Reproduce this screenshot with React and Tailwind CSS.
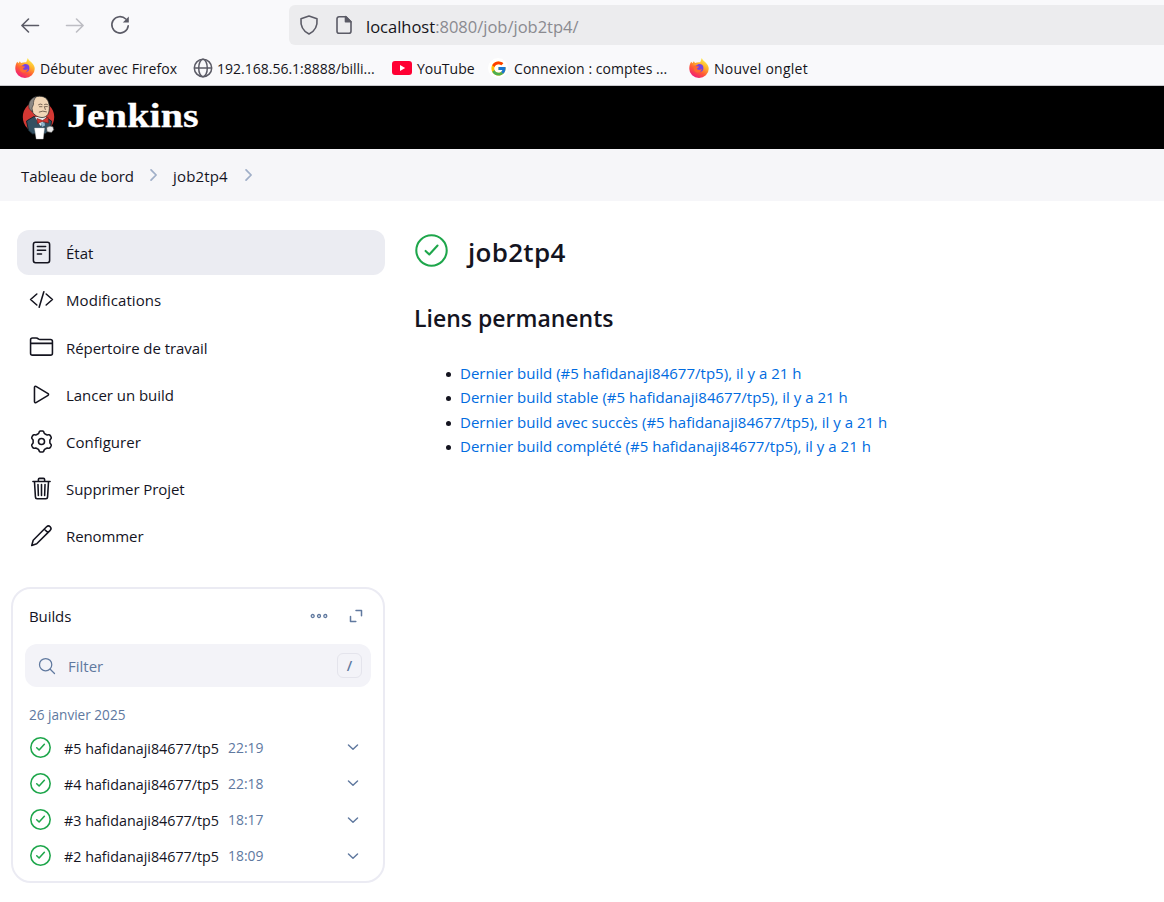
import React from "react";
import { FcGoogle } from "react-icons/fc";

function Stroke({ className, width = 32, children }) {
  return (
    <svg viewBox="0 0 512 512" className={className} fill="none" stroke="currentColor" strokeWidth={width} strokeLinecap="round" strokeLinejoin="round">
      {children}
    </svg>
  );
}

function Firefox() {
  return (
    <svg viewBox="0 0 20 20" className="size-5 shrink-0">
      <defs>
        <linearGradient id="fx" x1="0.85" y1="0.05" x2="0.3" y2="1">
          <stop offset="0" stopColor="#fff44f" />
          <stop offset="0.35" stopColor="#ffb02a" />
          <stop offset="0.65" stopColor="#ff5a36" />
          <stop offset="1" stopColor="#f0197a" />
        </linearGradient>
      </defs>
      <path d="M2.200 3.700 3.500 5.200 4.800 3.300 6 5c1.700-.8 3.500-1 5.200-.8L12.800 0c.4 2 2.500 3 3.800 4.500C19 7 19.900 9 19.700 11a9.700 9 0 0 1-19.400 0C.2 8.200.9 5.500 2.200 3.700Z" fill="url(#fx)" />
      <circle cx="10.300" cy="10" r="4.100" fill="#7542e5" />
      <path d="M4.800 8.200c1.500-.5 3.500.2 5.300.4-.3 1.400-2 1.400-2 2.300 1 1.400 3.700 1.100 4.800-.3-.4 2.600-2 4-4.200 3.900-2.800 0-4.600-3-3.900-6.300Z" fill="#ff6a32" />
      <path d="M4 6.500c2-1.700 4.500-1.300 5.600-.5-1 .2-1.500.8-1.400 1.600Z" fill="#ffa030" />
    </svg>
  );
}

function Globe() {
  return (
    <svg viewBox="0 0 20 20" className="size-5 shrink-0 text-[#5b5b66]" fill="none" stroke="currentColor" strokeWidth="1.500">
      <circle cx="10" cy="10" r="8.700" />
      <ellipse cx="10" cy="10" rx="4.300" ry="8.700" />
      <path d="M1.500 10h17" />
    </svg>
  );
}

function YouTube() {
  return (
    <svg viewBox="0 0 20 14" className="h-3.5 w-5 shrink-0">
      <rect width="20" height="14" rx="3" fill="#ff0033" />
      <path d="M8 4v6l5.200-3z" fill="#fff" />
    </svg>
  );
}

function Mascot() {
  return (
    <svg viewBox="0 0 34 45" className="h-[45px] w-[34px] shrink-0">
      <ellipse cx="16.500" cy="22" rx="15.700" ry="16" fill="#d33833" />
      <path d="M4.500 26 12 21.500l6 3 5-2.500 6.500 4-1 8-5 4.500-13 .5-4-3.500Z" fill="#335061" stroke="#152229" strokeWidth="1" />
      <path d="M13 22 18.500 31l6-9Z" fill="#e9eef0" />
      <path d="M15 23.500 20.500 25.500l5.500-3.500.5 6-6-1.500-5 2Z" fill="#d33833" stroke="#7a1614" strokeWidth=".6" />
      <path d="M18.500 27.500 22.500 27.500l.5 3-3 1.500Z" fill="#8fb4cc" />
      <path d="M7.500 12C7 5 12 1.200 17.500 1.200c6.500 0 9.500 4 9.800 10.300.4 6.500-1.800 11-7.300 11-5.500-.3-9.500-3.500-11-9Z" fill="#f0d6b7" stroke="#2b2b2b" strokeWidth=".8" />
      <path d="M7.300 14C5.500 8 8.500 3 14.500 1.500 12 4 11.300 6.500 11.500 9.500l-1.500 3.500.8 4Z" fill="#8a8783" stroke="#2b2b2b" strokeWidth=".6" />
      <path d="M16.500 9.700q1.600-1.500 3.600-.2M22.500 9.500q1.500-1 3 0M17.500 11.700h2.500M23.300 11.600h2M22.300 11.500l1 3M17.200 17q3.500-1.800 7.300-.2" fill="none" stroke="#5a4a3c" strokeWidth=".8" strokeLinecap="round" />
      <path d="M12.500 33h10l-1.300 11h-7Z" fill="#fff" stroke="#bbb" strokeWidth=".4" />
      <path d="M24.500 32.500q3.500-2.500 6.500-.8l.8 3-2.300 2.800-4.500-.8Z" fill="#e8e8e8" stroke="#444" strokeWidth=".7" />
    </svg>
  );
}

function Success({ className, width = 32 }) {
  return (
    <Stroke className={className} width={width}>
      <circle cx="256" cy="256" r="236" />
      <path d="M350 178 222 318l-58-56" />
    </Stroke>
  );
}

const gear = Array.from({ length: 120 }, (_, i) => {
  const a = (i / 120) * Math.PI * 2;
  const r = 194 + 23 * Math.tanh(2.2 * Math.cos(6 * a));
  return `${i ? "L" : "M"}${(256 + r * Math.sin(a)).toFixed(1)} ${(256 - r * Math.cos(a)).toFixed(1)}`;
}).join("") + "Z";

const menu = [
  {
    label: "État", active: true, track: "tracking-[0px]",
    icon: <><rect x="90" y="46" width="332" height="420" rx="44" /><path d="M172 134h168M172 210h168M172 286h84" /></>,
  },
  { label: "Modifications", track: "tracking-[0.07px]", icon: <path d="M160 368 32 256l128-112M352 368l128-112-128-112M304 96l-96 320" /> },
  {
    label: "Répertoire de travail", track: "tracking-[-0.06px]",
    icon: <path d="M440 432H72a40 40 0 0 1-40-40V120a40 40 0 0 1 40-40h75.890a40 40 0 0 1 22.190 6.720l27.840 18.560a40 40 0 0 0 22.190 6.720H440a40 40 0 0 1 40 40v240a40 40 0 0 1-40 40zM32 192h448" />,
  },
  {
    label: "Lancer un build", track: "tracking-[-0.04px]",
    icon: <path d="M112 111v290c0 17.440 17 28.520 31 20.160l247.900-148.370c12.120-7.250 12.120-26.330 0-33.580L143 90.840c-14-8.360-31 2.720-31 20.160z" />,
  },
  { label: "Configurer", track: "tracking-[0.03px]", icon: <><path d={gear} /><circle cx="256" cy="256" r="62" /></> },
  {
    label: "Supprimer Projet", track: "tracking-[-0.07px]",
    icon: <path d="m112 112 20 320c.95 18.490 14.400 32 32 32h184c17.670 0 30.870-13.510 32-32l20-320M80 112h352M192 112V72a24 24 0 0 1 24-24h80a24 24 0 0 1 24 24v40M256 176v224M184 176l8 224M328 176l-8 224" />,
  },
  {
    label: "Renommer", track: "tracking-[-0.1px]",
    icon: <path d="M56 460 86 352 360 76c24-22 54-20 74 0s20 52 0 74L158 426ZM312 124l74 74" />,
  },
];

const builds = [
  { n: "#5", time: "22:19" },
  { n: "#4", time: "22:18" },
  { n: "#3", time: "18:17" },
  { n: "#2", time: "18:09" },
];

const links = [
  "Dernier build (#5 hafidanaji84677/tp5), il y a 21 h",
  "Dernier build stable (#5 hafidanaji84677/tp5), il y a 21 h",
  "Dernier build avec succès (#5 hafidanaji84677/tp5), il y a 21 h",
  "Dernier build complété (#5 hafidanaji84677/tp5), il y a 21 h",
];

function Chevron() {
  return <Stroke className="size-[18px] text-[#a0afc8]" width={50}><path d="m200 112 144 144-144 144" /></Stroke>;
}

export default function App() {
  return (
    <div className="flex h-[902px] w-[1164px] flex-col overflow-hidden bg-white font-['Open_Sans',sans-serif] text-[15px] text-[#14141f]">
      <div className="flex h-[50px] shrink-0 items-center bg-[#f9f9fb] pl-5 text-[#5b5b66]">
        <svg viewBox="0 0 20 20" className="size-5" fill="none" stroke="currentColor" strokeWidth="1.600" strokeLinecap="round" strokeLinejoin="round"><path d="M18.500 10.500H2M8.500 4 1.900 10.500l6.600 6.500" /></svg>
        <svg viewBox="0 0 20 20" className="ml-[25px] size-5 text-[#bdbdc3]" fill="none" stroke="currentColor" strokeWidth="1.600" strokeLinecap="round" strokeLinejoin="round"><path d="M1.500 10.500H18M11.500 4l6.600 6.500-6.600 6.500" /></svg>
        <svg viewBox="0 0 20 20" className="ml-[25px] size-5" fill="none" stroke="currentColor" strokeWidth="1.600" strokeLinecap="round"><path d="M15.800 4A8.200 8.200 0 1 0 18.200 10.800" /><path d="M18.800 1.500v6h-6z" fill="currentColor" stroke="none" /></svg>
        <div className="ml-[159px] flex h-10 flex-1 items-center rounded-l-md bg-[#ececee] pl-2.5">
          <svg viewBox="0 0 20 20" className="size-5" fill="none" stroke="currentColor" strokeWidth="1.600" strokeLinejoin="round"><path d="M10 1 18 3.800c.6 6.200-1.500 12-8 15.200C3.500 15.800 1.400 10 2 3.800Z" /></svg>
          <svg viewBox="0 0 20 20" className="ml-[15px] size-5" fill="none" stroke="currentColor" strokeWidth="1.600" strokeLinejoin="round"><path d="M12 1.800H5A2 2 0 0 0 3 3.800v12.400a2 2 0 0 0 2 2h10a2 2 0 0 0 2-2V7Z" /><path d="M11.500 1.500v5.300h5.500z" fill="currentColor" /></svg>
          <span className="ml-3 pt-[5px] text-[16.500px] text-[#8a8a90]"><span className="text-[#15141a]">localhost</span>:8080/job/job2tp4/</span>
        </div>
      </div>
      <div className="flex h-[36px] shrink-0 items-center border-b border-[#c8c8cc] bg-[#f9f9fb] pl-[15px] pt-px text-[14px] text-[#15141a]">
        <Firefox /><span className="ml-[5px] w-[153px] whitespace-nowrap pt-px tracking-[0.100px]">Débuter avec Firefox</span>
        <Globe /><span className="ml-1 w-[175px] whitespace-nowrap pt-px">192.168.56.1:8888/billi...</span>
        <YouTube /><span className="ml-[5px] w-[72px] pt-px">YouTube</span>
        <span className="-ml-px flex size-5 shrink-0 items-center justify-center rounded-full bg-white"><FcGoogle className="size-[17px]" /></span>
        <span className="ml-[6px] w-[175px] whitespace-nowrap pt-px tracking-[0.060px]">Connexion : comptes ...</span>
        <Firefox /><span className="ml-[5px] whitespace-nowrap pt-px tracking-[0.260px]">Nouvel onglet</span>
      </div>
      <header className="flex h-[63px] shrink-0 items-center bg-black pl-[22px]">
        <Mascot />
        <span className="ml-[11px] origin-left scale-x-[1.18] pb-1 font-['Liberation_Serif',serif] text-[34px] font-bold text-white [-webkit-text-stroke:0.3px_white]">Jenkins</span>
      </header>
      <nav className="flex h-[52px] shrink-0 items-center bg-[#f6f6f9] pl-[21px]">
        <span className="w-[123px] whitespace-nowrap pt-0.5 tracking-[-0.1px]">Tableau de bord</span>
        <Chevron />
        <span className="ml-[11px] w-[66px] pt-0.5 tracking-[0.160px]">job2tp4</span>
        <Chevron />
      </nav>
      <div className="flex flex-1">
        <aside className="w-[385px] shrink-0 pl-[11px] pt-[29px]">
          <div className="ml-1.5 flex flex-col gap-[2.200px]">
            {menu.map((m) => (
              <a key={m.label} className={`flex h-[45px] items-center rounded-xl pl-3 ${m.active ? "bg-[#ebecf2]" : ""}`}>
                <Stroke className="size-[25px]">{m.icon}</Stroke>
                <span className={`ml-3 pt-[2px] ${m.track}`}>{m.label}</span>
              </a>
            ))}
          </div>
          <section className="mt-[29px] h-[296px] rounded-[20px] border-2 border-[#ebebf3] px-3">
            <div className="flex h-[55px] items-center pb-0.5 pl-1">
              <h2 className="flex-1 pt-px tracking-[-0.100px]">Builds</h2>
              <svg viewBox="0 0 20 8" className="mr-5 h-2 w-5 text-[#60799f]" fill="none" stroke="currentColor" strokeWidth="1.300"><circle cx="3.700" cy="4" r="1.500" /><circle cx="10" cy="4" r="1.500" /><circle cx="16.300" cy="4" r="1.500" /></svg>
              <svg viewBox="0 0 14 14" className="mr-2 size-3.5 text-[#60799f]" fill="none" stroke="currentColor" strokeWidth="1.500" strokeLinecap="round" strokeLinejoin="round"><path d="M7 1.500h5.500v5.300M1.500 7.500v5h5.300" /></svg>
            </div>
            <div className="flex h-[43px] items-center rounded-xl bg-[#f3f3f8] pl-3 pr-[9px] text-[#60799f]">
              <Stroke className="size-5"><circle cx="221" cy="221" r="157" /><path d="m338 338 110 110" /></Stroke>
              <span className="ml-[11px] flex-1 pt-px">Filter</span>
              <kbd className="flex size-[25px] items-center justify-center rounded-md border border-[#e4e4ec] font-['Open_Sans',sans-serif] text-[14px] font-semibold">/</kbd>
            </div>
            <div className="mt-[18px] pl-[4px] text-[13.600px] leading-5 text-[#60799f]">26 janvier 2025</div>
            <div className="mt-[4px] flex flex-col">
              {builds.map((b) => (
                <div key={b.n} className="flex h-[36.200px] items-center pl-[5px] pr-[11px]">
                  <Success className="-ml-[0.500px] size-[21px] text-[#1ea64b]" width={38} />
                  <span className="ml-[13.500px] w-[164px] whitespace-nowrap pt-0.5 text-[14.300px]">{b.n} hafidanaji84677/tp5</span>
                  <span className="flex-1 pt-0.5 text-[13.900px] text-[#60799f]">{b.time}</span>
                  <Stroke className="size-3.5 text-[#60799f]" width={52}><path d="M90 180 256 342 422 180" /></Stroke>
                </div>
              ))}
            </div>
          </section>
        </aside>
        <main className="pl-[30px] pt-[30px]">
          <div className="flex h-10 items-center">
            <Success className="mb-px size-[33px] text-[#1ea64b]" width={32} />
            <h1 className="ml-[20px] pt-0.5 text-[26px] font-semibold tracking-[0.300px]">job2tp4</h1>
          </div>
          <h2 className="-ml-px mt-[29px] text-[23px] leading-9 font-semibold">Liens permanents</h2>
          <ul className="mt-[25px] leading-[24.300px]">
            {links.map((l) => (
              <li key={l} className="flex items-center pl-[31px]">
                <span className="mt-[3px] size-[5px] rounded-full bg-[#14141f]" />
                <a className="ml-[9px] tracking-[0.020px] whitespace-nowrap text-[#006be0]">{l}</a>
              </li>
            ))}
          </ul>
        </main>
      </div>
    </div>
  );
}
